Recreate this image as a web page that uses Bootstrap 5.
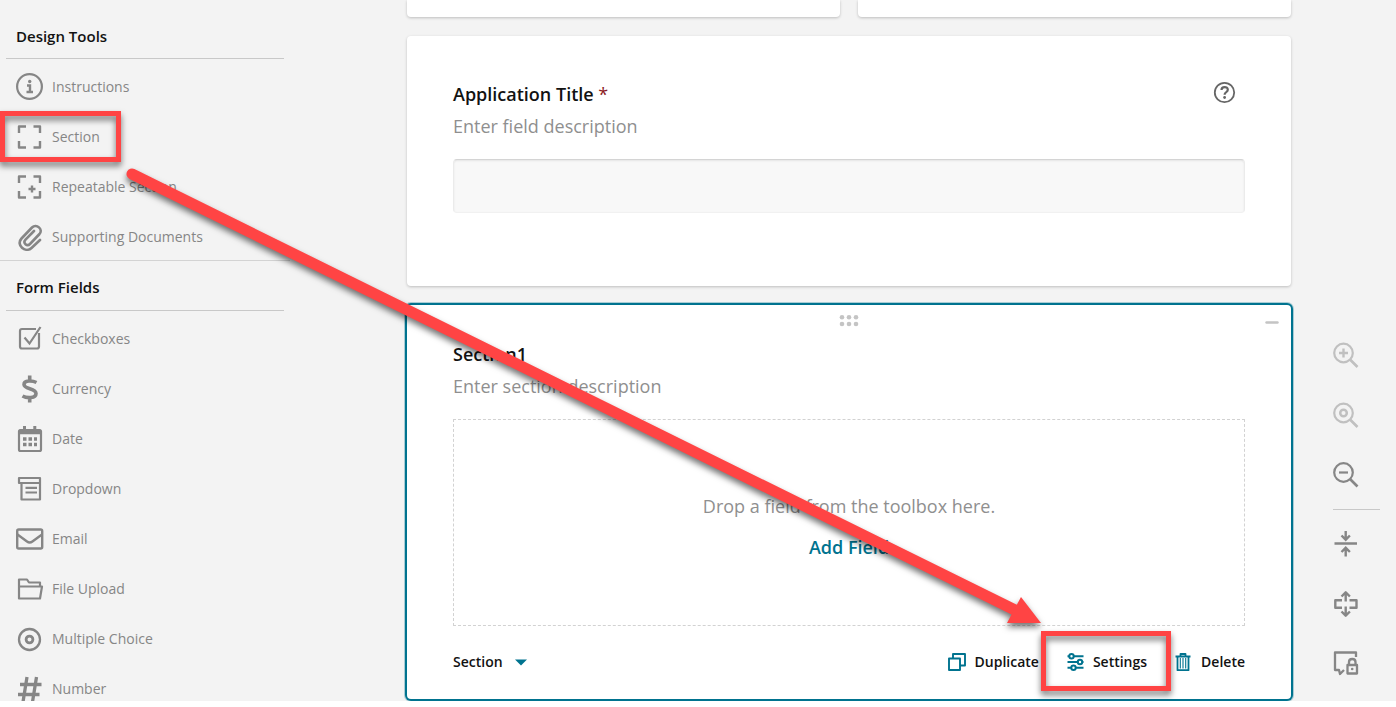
<!DOCTYPE html>
<html lang="en">
<head>
<meta charset="utf-8">
<meta name="viewport" content="width=device-width, initial-scale=1">
<title>Form designer</title>
<link href="https://cdn.jsdelivr.net/npm/bootstrap@5.3.0/dist/css/bootstrap.min.css" rel="stylesheet">
<style>
  :root { --teal: #00738f; --ink: #121212; --soft: #868686; --faint: #c4c4c4; --mark-red: #ff4444; }
  body { font-family: "Open Sans", "Noto Sans", sans-serif; color: var(--ink); background: #fff; }
  svg { display: block; flex: none; fill: none; stroke: currentColor; }
  .designer { height: calc(100vh - 6px); background: #f3f3f3; }
  .toolbox { width: 290px; }
  .tool-heading { font-size: 15px; line-height: 20px; font-weight: 600; margin: 0 6px; padding: 16px 10px 13px; border-bottom: 1px solid #c8c8c8; }
  .tool-heading.first-heading { padding: 26px 10px 12px; }
  .tool-list { padding: 7px 0 2px; gap: 8px; }
  .tool-list.ruled { border-bottom: 1px solid #d3d3d3; }
  .tool-item { height: 42px; font-size: 14px; line-height: 20px; font-weight: 530; color: var(--soft); padding: 0 16px; gap: 8px; border: 0; background: none; }
  .canvas { padding: 0 19px 0 117px; gap: 19px; }
  .panel { background: #fff; border-radius: 4px; box-shadow: 0 1px 3px rgba(0,0,0,.22); }
  .stub { height: 17px; border-radius: 0 0 4px 4px; }
  .stub-row { gap: 18px; }
  .field-panel { padding: 45px 46px 73px; }
  .field-title { font-size: 18px; line-height: 27px; font-weight: 600; margin: 0 0 5px; }
  .field-hint { font-size: 18px; line-height: 27px; color: #8f8f8f; margin: 0 0 19px; }
  .required { color: #8b1a24; font-weight: 500; }
  .title-input { height: 54px; background: #f8f8f8; border: 1px solid #ebebeb; border-top-color: #d4d4d4; border-bottom-color: #f1f1f1; border-radius: 4px; box-shadow: inset 0 1px 2px rgba(0,0,0,.08); }
  .icon-btn { border: 0; background: none; padding: 0; }
  .help { color: #666; margin-right: 9px; }
  .active-panel { box-shadow: 0 0 0 2px var(--teal), 0 0 0 3px rgba(0,115,143,.3); padding: 0 46px 1px; }
  .grip-row { height: 36px; padding-top: 10px; margin: 0 -34px; color: var(--faint); }
  .grip-spacer { width: 14px; }
  .drop-zone { height: 207px; border: 1px dashed #d2d2d2; font-size: 18px; line-height: 27px; color: #8f8f8f; gap: 14px; padding-top: 8px; }
  .add-field { color: var(--teal); font-weight: 600; text-decoration: none; }
  .panel-foot { height: 72px; }
  .foot-btn { font-size: 14px; line-height: 20px; font-weight: 540; color: var(--ink); gap: 8px; }
  .foot-btn svg { color: var(--teal); }
  .foot-actions { gap: 26px; }
  .rail { width: 86px; padding: 0 16px 24px 23px; }
  .rail-group { gap: 34px; color: var(--soft); }
  .rail-group button { color: inherit; }
  .rail-group button:disabled { color: #c0c0c0; }
  .rail-line { height: 1px; background: #c8c8c8; margin: 21px 0; }
  .callouts { left: 0; top: 0; pointer-events: none; filter: drop-shadow(0 4px 3px rgba(0,0,0,.55)); }
</style>
</head>
<body>
<div class="designer d-flex overflow-hidden position-relative">
  <aside class="toolbox flex-shrink-0">
    <h2 class="tool-heading first-heading">Design Tools</h2>
    <div class="tool-list ruled d-flex flex-column">
      <button class="tool-item d-flex align-items-center" type="button"><svg width="28" height="28" viewBox="0 0 28 28" stroke-width="2.200"><circle cx="13.500" cy="13.500" r="12.400"/><path d="M11 12.500h3v6M10.500 19h6.500" stroke-width="2.400"/><circle cx="13.700" cy="8.500" r="1.700" fill="currentColor" stroke="none"/></svg>Instructions</button>
      <button class="tool-item d-flex align-items-center" type="button"><svg width="28" height="28" viewBox="0 0 28 28" stroke-width="2.400" stroke-linejoin="round"><path d="M3 10V3.500h7M17.500 3.500H24V10M24 18v6.500h-6.500M10 24.500H3V18"/></svg>Section</button>
      <button class="tool-item d-flex align-items-center" type="button"><svg width="28" height="28" viewBox="0 0 28 28" stroke-width="2.400" stroke-linejoin="round"><path d="M3 10V3.500h7M17.500 3.500H24V10M24 18v6.500h-6.500M10 24.500H3V18M16 12.500v7M12.500 16h7"/></svg>Repeatable Section</button>
      <button class="tool-item d-flex align-items-center" type="button"><svg width="28" height="28" viewBox="0 0 28 28" stroke-width="2.600" stroke-linecap="round"><path d="M24 17l-8.500 8c-6 5.500-16-3-10-9.500L16 4.500c4.500-4.500 11.500 2 7.500 6.500L14 21c-3 3-7.500-1-4.500-4.300L18 8"/></svg>Supporting Documents</button>
    </div>
    <h2 class="tool-heading">Form Fields</h2>
    <div class="tool-list d-flex flex-column">
      <button class="tool-item d-flex align-items-center" type="button"><svg width="28" height="28" viewBox="0 0 28 28" stroke-width="2.200"><path d="M20 4H6q-2 0-2 2v15.500q0 2 2 2h15q2 0 2-2V8"/><path d="M8.500 12.500l5 6L24.500 2"/></svg>Checkboxes</button>
      <button class="tool-item d-flex align-items-center" type="button"><svg width="28" height="28" viewBox="0 0 28 28" stroke-width="3.600"><path d="M20.500 7.500C16.500 5.500 8 5 8 9.500c0 5 12 3.500 12 9 0 5-9 5-13.500 2.500M13.700.5V6M13.700 22v5.500"/></svg>Currency</button>
      <button class="tool-item d-flex align-items-center" type="button"><svg width="28" height="28" viewBox="0 0 28 28" stroke-width="2.200"><rect x="3" y="5" width="22" height="21" rx="1.500"/><path d="M3 7h22" stroke-width="4.500"/><path d="M8.500 1v5M18.800 1v5" stroke-width="3"/><path d="M7 14h3.500m2 0H16m2 0h3M7 19.500h3.500m2 0H16m2 0h3" stroke-width="3.600"/></svg>Date</button>
      <button class="tool-item d-flex align-items-center" type="button"><svg width="28" height="28" viewBox="0 0 28 28" stroke-width="2.200" stroke-linejoin="round"><path d="M3 8V3h21v5zM5.500 8v16.500H24V8M9.500 12.800h11.500M9.500 17.500h11.500"/></svg>Dropdown</button>
      <button class="tool-item d-flex align-items-center" type="button"><svg width="28" height="28" viewBox="0 0 28 28" stroke-width="2.400"><rect x="1.200" y="4.500" width="25" height="19" rx="1.500"/><path d="M1.500 9.500l9.500 7q2.700 2 5.400 0L26 9.500"/></svg>Email</button>
      <button class="tool-item d-flex align-items-center" type="button"><svg width="28" height="28" viewBox="0 0 28 28" stroke-width="2.200" stroke-linejoin="round"><path d="M3 23.500V4.500h8l2 3h11V11M3 11.500h23l-2 12H3z"/></svg>File Upload</button>
      <button class="tool-item d-flex align-items-center" type="button"><svg width="28" height="28" viewBox="0 0 28 28" stroke-width="2.300"><circle cx="13.500" cy="14.500" r="10.500"/><circle cx="13.500" cy="14.500" r="3.400" stroke-width="2.800"/></svg>Multiple Choice</button>
      <button class="tool-item d-flex align-items-center" type="button"><svg width="28" height="28" viewBox="0 0 28 28" stroke-width="3.300"><path d="M11 2L7 27M20.500 2l-4 25M4 9.500h21.500M2 19.500h21.500"/></svg>Number</button>
    </div>
  </aside>

  <main class="canvas d-flex flex-column flex-grow-1">
    <div class="stub-row d-flex">
      <div class="panel stub flex-fill"></div>
      <div class="panel stub flex-fill"></div>
    </div>
    <section class="panel field-panel">
      <div class="d-flex justify-content-between align-items-start">
        <label class="field-title" for="appTitle">Application Title <span class="required">*</span></label>
        <button class="icon-btn help" type="button" aria-label="Help"><svg width="24" height="24" viewBox="0 0 24 24" stroke-width="1.800"><circle cx="12.500" cy="11.500" r="9.700"/><path d="M9.500 9c0-4 6.300-3.800 6.300-.3 0 2.500-3.200 2.600-3.200 5" stroke-width="2.200"/><circle cx="12.600" cy="16.500" r="1.400" fill="currentColor" stroke="none"/></svg></button>
      </div>
      <p class="field-hint">Enter field description</p>
      <input class="title-input d-block w-100" id="appTitle" type="text">
    </section>

    <section class="panel active-panel">
      <div class="grip-row d-flex justify-content-between align-items-start">
        <span class="grip-spacer"></span>
        <svg width="20" height="12" viewBox="0 0 20 12"><g fill="currentColor" stroke="none"><circle cx="3" cy="2.300" r="2.300"/><circle cx="10" cy="2.300" r="2.300"/><circle cx="17" cy="2.300" r="2.300"/><circle cx="3" cy="9" r="2.300"/><circle cx="10" cy="9" r="2.300"/><circle cx="17" cy="9" r="2.300"/></g></svg>
        <button class="icon-btn text-reset" type="button" aria-label="Collapse"><svg width="14" height="12" viewBox="0 0 14 12" stroke-width="2.400" stroke-linecap="round"><path d="M1.500 7.500h11"/></svg></button>
      </div>
      <h3 class="field-title">Section1</h3>
      <p class="field-hint">Enter section description</p>
      <div class="drop-zone d-flex flex-column align-items-center justify-content-center">
        <span>Drop a field from the toolbox here.</span>
        <a class="add-field" href="#">Add Field</a>
      </div>
      <div class="panel-foot d-flex justify-content-between align-items-center">
        <button class="icon-btn foot-btn d-flex align-items-center" type="button">Section<svg width="20" height="8" viewBox="0 0 20 8"><path d="M4 1.500h12L10 7.500z" fill="currentColor" stroke="none"/></svg></button>
        <div class="foot-actions d-flex">
          <button class="icon-btn foot-btn d-flex align-items-center" type="button"><svg width="20" height="20" viewBox="0 0 20 20" stroke-width="1.900" stroke-linejoin="round"><rect x="2" y="6.500" width="11" height="11.500"/><path d="M6 6.500V2h12v11.500h-5"/></svg>Duplicate</button>
          <button class="icon-btn foot-btn d-flex align-items-center" type="button"><svg width="20" height="20" viewBox="0 0 20 20" stroke-width="2"><circle cx="6.500" cy="4.300" r="2.200"/><circle cx="15" cy="10" r="2.200"/><circle cx="8.500" cy="15.800" r="2.200"/><path d="M2.500 4.300h2M9 4.300h9.500M2.500 10H13M17.200 10h1.300M2.500 15.800h4M11 15.800h7.500"/></svg>Settings</button>
          <button class="icon-btn foot-btn d-flex align-items-center" type="button"><svg width="20" height="20" viewBox="0 0 20 20" stroke-width="1.800"><path d="M2.500 4.500h15M7.500 4V2h5v2M4.500 5v13.200h11V5" stroke-linejoin="round"/><path d="M7.300 6v10.500M10 6v10.500M12.700 6v10.500" stroke-width="1.100"/></svg>Delete</button>
        </div>
      </div>
    </section>
  </main>

  <nav class="rail flex-shrink-0 d-flex flex-column justify-content-end" aria-label="View tools">
    <div class="rail-group d-flex flex-column align-items-start">
      <button class="icon-btn" type="button" aria-label="Zoom in" disabled><svg width="26" height="26" viewBox="0 0 26 26" stroke-width="2.200"><circle cx="10.500" cy="11" r="9.300"/><path d="M17 17.500l7.500 7.500" stroke-width="2.600"/><path d="M10.500 6.500v9M6 11h9" stroke-width="2.400"/></svg></button>
      <button class="icon-btn" type="button" aria-label="Reset zoom" disabled><svg width="26" height="26" viewBox="0 0 26 26" stroke-width="2.200"><circle cx="10.500" cy="11" r="9.300"/><path d="M17 17.500l7.500 7.500" stroke-width="2.600"/><circle cx="10.500" cy="11" r="3.300" stroke-width="2.500"/></svg></button>
      <button class="icon-btn" type="button" aria-label="Zoom out"><svg width="26" height="26" viewBox="0 0 26 26" stroke-width="2.200"><circle cx="10.500" cy="10.500" r="9.300"/><path d="M17 17l7.500 7.500" stroke-width="2.600"/><path d="M6 10.500h9" stroke-width="2.200"/></svg></button>
    </div>
    <div class="rail-line"></div>
    <div class="rail-group d-flex flex-column align-items-start">
      <button class="icon-btn" type="button" aria-label="Collapse all"><svg width="26" height="26" viewBox="0 0 26 26" stroke-width="2.400"><path d="M1.500 12.500H24M12.700 0v8.500M8.500 4.500l4.200 4.200 4.200-4.200M12.700 25.500v-8.500M8.500 21l4.200-4.200 4.200 4.200"/></svg></button>
      <button class="icon-btn" type="button" aria-label="Expand all"><svg width="26" height="26" viewBox="0 0 26 26" stroke-width="2.400" stroke-linejoin="round"><path d="M12.700 10.500V1.500M8.500 5.500l4.200-4.200 4.200 4.200M12.700 15.500v9M8.500 20.500l4.200 4.200 4.200-4.200M9 9.200H2.300v7.600H9M16.500 9.200h7v7.600h-7"/></svg></button>
      <button class="icon-btn" type="button" aria-label="Lock comments"><svg width="26" height="26" viewBox="0 0 26 26" stroke-width="2.300" stroke-linejoin="round"><path d="M23 6V1.500H2V19h4l1 4 4-4"/><rect x="14.500" y="14" width="9.500" height="8.500"/><path d="M16 14v-3c0-4 6.500-4 6.500 0v3"/><circle cx="19.200" cy="18" r="1.300" fill="currentColor" stroke="none"/></svg></button>
    </div>
  </nav>

  <!-- Callout arrow from the Section tool to its Settings button -->
  <svg class="callouts position-absolute" width="1200" height="701" viewBox="0 0 1200 701" style="color:var(--mark-red)" aria-hidden="true">
    <path d="M2.500 113.500h116v46h-116zM1043.500 633.500h125v55h-125z" stroke-width="5"/>
    <path d="M132 174L1020 612.500" stroke-width="11" stroke-linecap="round"/>
    <path d="M1021 597l20 26h-34z" fill="currentColor" stroke="none"/>
  </svg>
</div>
<script src="https://cdn.jsdelivr.net/npm/bootstrap@5.3.0/dist/js/bootstrap.bundle.min.js"></script>
</body>
</html>
